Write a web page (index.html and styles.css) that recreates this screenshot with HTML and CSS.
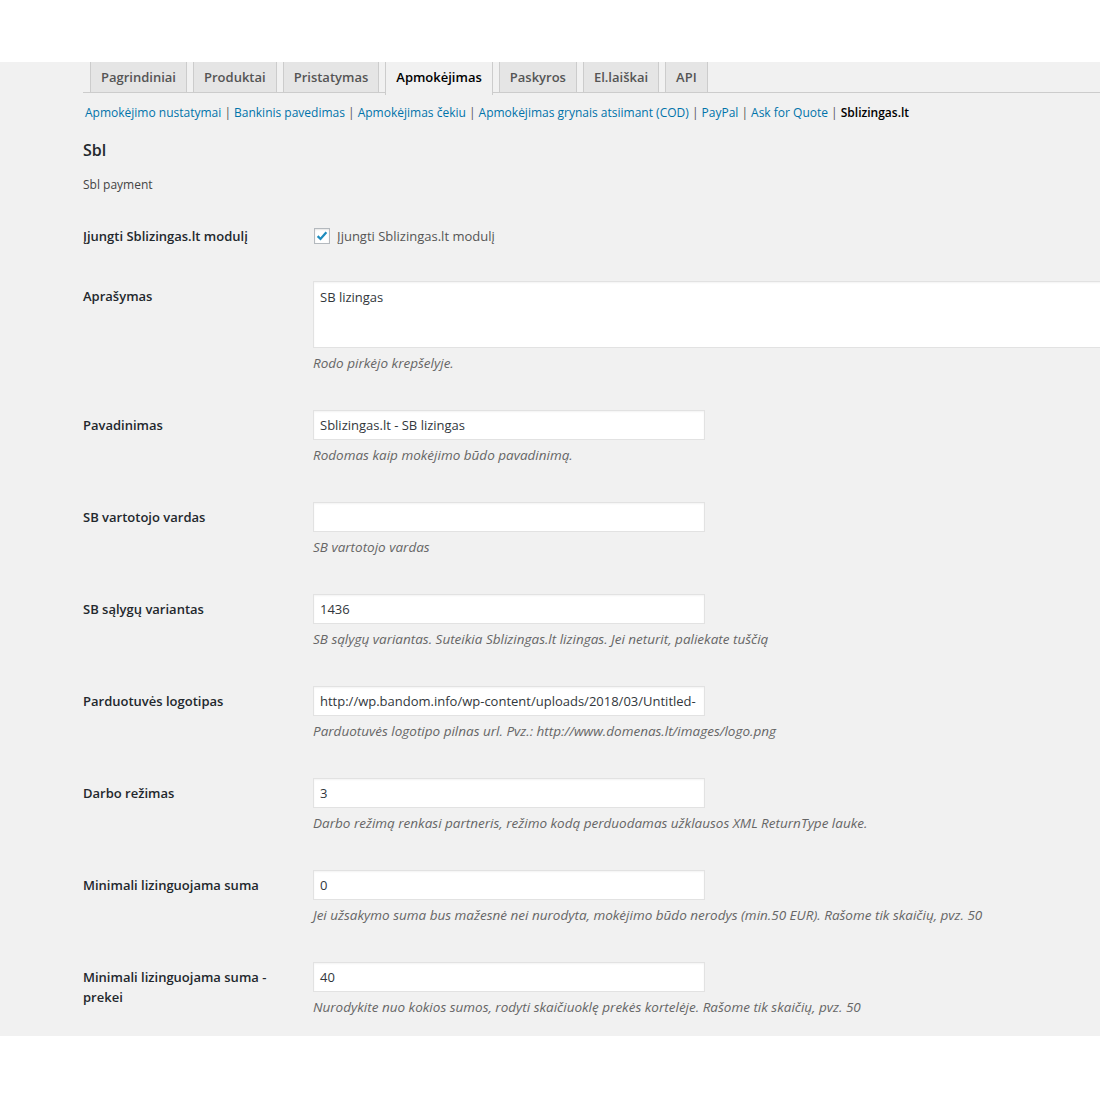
FILE: index.html
```html
<!DOCTYPE html>
<html lang="lt">
<head>
  <meta charset="UTF-8">
  <title>Apmokėjimas - Sblizingas.lt</title>
  <link rel="stylesheet" href="styles.css">
</head>
<body>
  <div class="wrap">
    <nav class="nav-tab-wrapper">
      <a class="nav-tab" href="#">Pagrindiniai</a>
      <a class="nav-tab" href="#">Produktai</a>
      <a class="nav-tab" href="#">Pristatymas</a>
      <a class="nav-tab nav-tab-active" href="#">Apmokėjimas</a>
      <a class="nav-tab" href="#">Paskyros</a>
      <a class="nav-tab" href="#">El.laiškai</a>
      <a class="nav-tab" href="#">API</a>
    </nav>

    <ul class="subsubsub">
      <li><a href="#">Apmokėjimo nustatymai</a> |</li>
      <li><a href="#">Bankinis pavedimas</a> |</li>
      <li><a href="#">Apmokėjimas čekiu</a> |</li>
      <li><a href="#">Apmokėjimas grynais atsiimant (COD)</a> |</li>
      <li><a href="#">PayPal</a> |</li>
      <li><a href="#">Ask for Quote</a> |</li>
      <li><a href="#" class="current">Sblizingas.lt</a></li>
    </ul>

    <h2 class="section-title">Sbl</h2>
    <p class="section-desc">Sbl payment</p>

    <table class="form-table">
      <tr>
        <th>Įjungti Sblizingas.lt modulį</th>
        <td>
          <label class="check-label">
            <span class="checkbox">
              <svg viewBox="0 0 16 16" width="14" height="14"><path d="M3 8.2 L6.3 11.4 L13 3.8" fill="none" stroke="#1e8cbe" stroke-width="2.6"/></svg>
            </span>
            Įjungti Sblizingas.lt modulį
          </label>
        </td>
      </tr>
      <tr>
        <th>Aprašymas</th>
        <td>
          <div class="textarea">SB lizingas</div>
          <p class="description">Rodo pirkėjo krepšelyje.</p>
        </td>
      </tr>
      <tr>
        <th>Pavadinimas</th>
        <td>
          <div class="input">Sblizingas.lt - SB lizingas</div>
          <p class="description">Rodomas kaip mokėjimo būdo pavadinimą.</p>
        </td>
      </tr>
      <tr>
        <th>SB vartotojo vardas</th>
        <td>
          <div class="input"></div>
          <p class="description">SB vartotojo vardas</p>
        </td>
      </tr>
      <tr>
        <th>SB sąlygų variantas</th>
        <td>
          <div class="input">1436</div>
          <p class="description">SB sąlygų variantas. Suteikia Sblizingas.lt lizingas. Jei neturit, paliekate tuščią</p>
        </td>
      </tr>
      <tr>
        <th>Parduotuvės logotipas</th>
        <td>
          <div class="input">http://wp.bandom.info/wp-content/uploads/2018/03/Untitled-</div>
          <p class="description">Parduotuvės logotipo pilnas url. Pvz.: http://www.domenas.lt/images/logo.png</p>
        </td>
      </tr>
      <tr>
        <th>Darbo režimas</th>
        <td>
          <div class="input">3</div>
          <p class="description">Darbo režimą renkasi partneris, režimo kodą perduodamas užklausos XML ReturnType lauke.</p>
        </td>
      </tr>
      <tr>
        <th>Minimali lizinguojama suma</th>
        <td>
          <div class="input">0</div>
          <p class="description">Jei užsakymo suma bus mažesnė nei nurodyta, mokėjimo būdo nerodys (min.50 EUR). Rašome tik skaičių, pvz. 50</p>
        </td>
      </tr>
      <tr>
        <th>Minimali lizinguojama suma - prekei</th>
        <td>
          <div class="input">40</div>
          <p class="description">Nurodykite nuo kokios sumos, rodyti skaičiuoklę prekės kortelėje. Rašome tik skaičių, pvz. 50</p>
        </td>
      </tr>
    </table>
  </div>
</body>
</html>
```

FILE: styles.css
```css
body {
  margin: 0;
  background: #fff;
  font-family: "Open Sans", "Noto Sans", sans-serif;
  font-size: 13px;
  color: #444;
}

.wrap {
  margin-top: 62px;
  background: #f1f1f1;
  padding: 0 0 0 83px;
  height: 974px;
  overflow: hidden;
}

/* tabs */
.nav-tab-wrapper {
  display: flex;
  border-bottom: 1px solid #ccc;
  height: 30px;
  padding-left: 7px;
}

.nav-tab {
  margin-right: 6px;
  padding: 2px 10px 0;
  line-height: 27px;
  font-size: 13px;
  font-weight: 600;
  color: #555;
  text-decoration: none;
  background: #e5e5e5;
  border: 1px solid #ccc;
  border-top: none;
  border-bottom: none;
}

.nav-tab-active {
  background: #f1f1f1;
  color: #000;
  height: 31px;
}

/* sub links */
.subsubsub {
  list-style: none;
  margin: 10px 0 0 2px;
  padding: 0;
  display: flex;
  line-height: 20px;
  color: #555;
  font-size: 12px;
}

.subsubsub li {
  margin-right: 3px;
}

.subsubsub a {
  color: #0073aa;
  text-decoration: none;
}

.subsubsub a.current {
  color: #000;
  font-weight: 600;
}

.section-title {
  margin: 15px 0 0;
  font-size: 16px;
  font-weight: 600;
  line-height: 24px;
  color: #23282d;
}

.section-desc {
  margin: 13px 0 0;
  line-height: 20px;
  font-size: 12px;
}

/* form */
.form-table {
  margin-top: 11px;
  border-collapse: collapse;
  table-layout: fixed;
  width: 1050px;
}

.form-table th {
  width: 200px;
  padding: 20px 30px 0 0;
  vertical-align: top;
  text-align: left;
  font-size: 13px;
  font-weight: 600;
  line-height: 20px;
  color: #23282d;
}

.form-table td {
  padding: 15px 0;
  vertical-align: top;
}

.check-label {
  display: flex;
  align-items: center;
  gap: 7px;
  height: 30px;
  color: #555;
}

.checkbox {
  width: 14px;
  height: 14px;
  border: 1px solid #b4b9be;
  background: #fff;
  box-shadow: inset 0 1px 2px rgba(0, 0, 0, 0.1);
  display: flex;
  align-items: center;
  justify-content: center;
  margin-left: 1px;
}

.input, .textarea {
  box-sizing: border-box;
  background: #fff;
  border: 1px solid #e2e2e2;
  box-shadow: inset 0 1px 2px rgba(0, 0, 0, 0.05);
  color: #32373c;
  padding: 0 6px;
  white-space: nowrap;
  overflow: hidden;
}

.input {
  width: 392px;
  height: 30px;
  line-height: 28px;
}

.textarea {
  width: 820px;
  height: 67px;
  padding-top: 5px;
  line-height: 20px;
}

.description {
  margin: 5px 0 7px;
  line-height: 20px;
  font-size: 13.5px;
  font-style: italic;
  color: #666;
  white-space: nowrap;
}
```
